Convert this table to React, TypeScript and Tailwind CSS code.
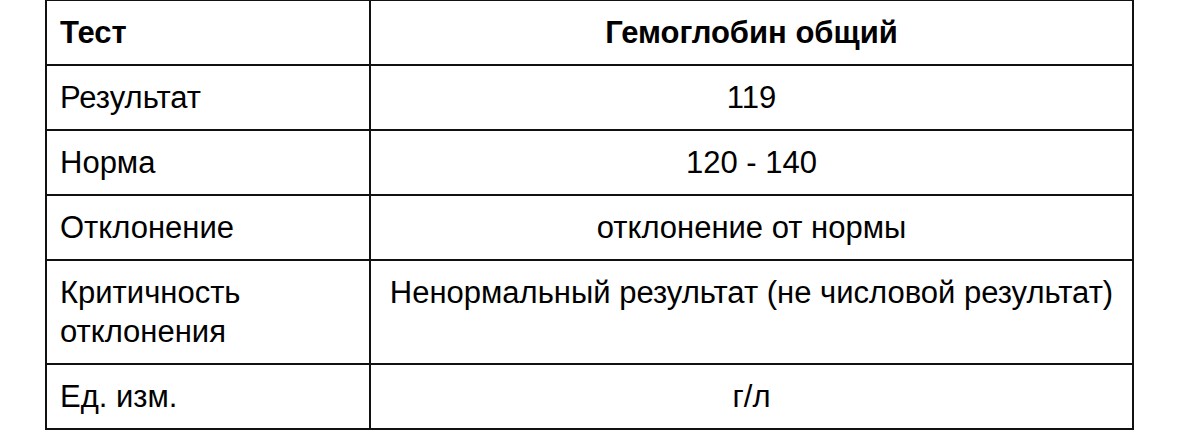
const rows: { label: string[]; value: string }[] = [
  { label: ['Результат'], value: '119' },
  { label: ['Норма'], value: '120 - 140' },
  { label: ['Отклонение'], value: 'отклонение от нормы' },
  { label: ['Критичность', 'отклонения'], value: 'Ненормальный результат (не числовой результат)' },
  { label: ['Ед. изм.'], value: 'г/л' },
]

export default function App() {
  return (
    <div className="h-[433px] w-[1179px] overflow-hidden bg-white pl-[45px] font-['Liberation_Sans',Arial,sans-serif] text-[31px] leading-[39px] text-black">
      <table className="-mt-[1px] w-[1089px] table-fixed border-collapse">
        <colgroup>
          <col className="w-[324px]" />
          <col />
        </colgroup>
        <thead>
          <tr>
            <th className="border-[2.5px] border-[#111] px-[13px] py-[12px] text-left font-bold">Тест</th>
            <th className="border-[2.5px] border-[#111] px-[13px] py-[12px] text-center font-bold">Гемоглобин общий</th>
          </tr>
        </thead>
        <tbody>
          {rows.map((r) => (
            <tr key={r.value}>
              <td className="border-[2.5px] border-[#111] px-[13px] py-[12px] align-top">
                {r.label.map((l) => (
                  <div key={l}>{l}</div>
                ))}
              </td>
              <td className="border-[2.5px] border-[#111] px-[13px] py-[12px] text-center align-top">{r.value}</td>
            </tr>
          ))}
        </tbody>
      </table>
    </div>
  )
}
